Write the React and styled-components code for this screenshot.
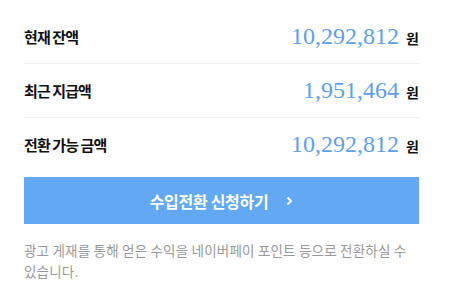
import React from "react";
import styled, { createGlobalStyle } from "styled-components";

const GlobalStyle = createGlobalStyle`
  html, body {
    margin: 0;
    padding: 0;
    background: #fff;
  }
  body {
    font-family: "Noto Sans CJK KR", "Noto Sans", sans-serif;
  }
`;

const Panel = styled.div`
  width: 395px;
  margin-left: 24px;
  padding-top: 10px;
`;

const Row = styled.div`
  display: flex;
  align-items: center;
  justify-content: space-between;
  height: 53px;
  border-bottom: ${(p) => (p.$last ? "none" : "1px solid #f0f0f0")};
`;

const Label = styled.span`
  font-size: 15px;
  font-weight: 700;
  color: #111;
  letter-spacing: -0.9px;
`;

const Amount = styled.div`
  display: flex;
  align-items: baseline;
  gap: 7px;
`;

const Number = styled.span`
  font-family: "Liberation Serif", "Times New Roman", serif;
  font-size: 24px;
  color: #5fa0e6;
`;

const Unit = styled.span`
  font-size: 14px;
  font-weight: 700;
  color: #111;
`;

const Button = styled.button`
  display: flex;
  align-items: center;
  justify-content: center;
  gap: 18px;
  width: 100%;
  height: 47px;
  margin-top: 6px;
  border: 0;
  background: #63a8f2;
  color: #fff;
  font-family: inherit;
  font-size: 16px;
  font-weight: 700;
  letter-spacing: -0.3px;
  cursor: pointer;
`;

const Note = styled.p`
  margin: 16px 0 0;
  font-size: 13.5px;
  line-height: 21px;
  color: #999;
  letter-spacing: 0.2px;
  word-break: keep-all;
`;

const rows = [
  { label: "현재 잔액", value: "10,292,812" },
  { label: "최근 지급액", value: "1,951,464" },
  { label: "전환 가능 금액", value: "10,292,812" },
];

const Chevron = () => (
  <svg width="7" height="10" viewBox="0 0 7 10">
    <path d="M1.5 1.5 L5 5 L1.5 8.5" fill="none" stroke="#fff" strokeWidth="2" />
  </svg>
);

const App = () => {
  return (
    <>
      <GlobalStyle />
      <Panel>
        {rows.map((r, i) => (
          <Row key={r.label} $last={i === rows.length - 1}>
            <Label>{r.label}</Label>
            <Amount>
              <Number>{r.value}</Number>
              <Unit>원</Unit>
            </Amount>
          </Row>
        ))}
        <Button>
          수입전환 신청하기
          <Chevron />
        </Button>
        <Note>
          광고 게재를 통해 얻은 수익을 네이버페이 포인트 등으로 전환하실 수
          있습니다.
        </Note>
      </Panel>
    </>
  );
};

export default App;
